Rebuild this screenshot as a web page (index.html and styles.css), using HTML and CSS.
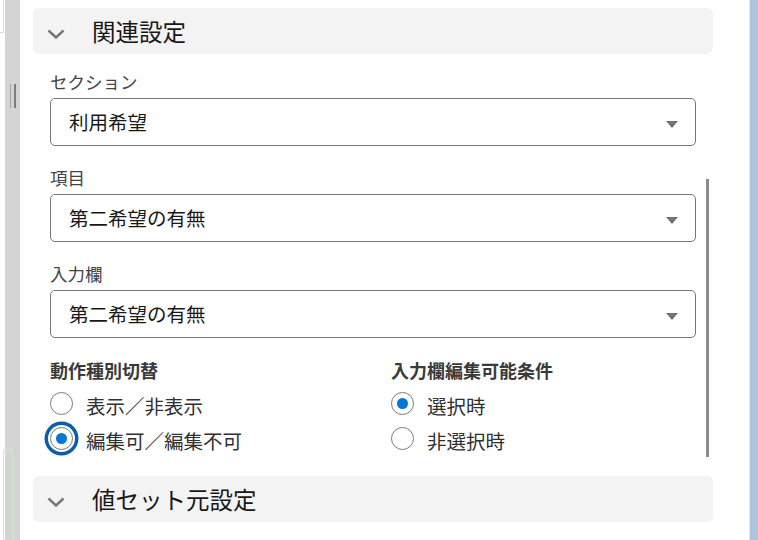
FILE: index.html
```html
<!DOCTYPE html>
<html lang="ja">
<head>
<meta charset="utf-8">
<title>関連設定</title>
<link rel="stylesheet" href="styles.css">
</head>
<body>
<div class="app">
  <div class="edge"><span class="edge-box top"></span><span class="edge-box bottom"></span></div>
  <div class="splitter"><span class="grip thin"></span><span class="grip thick"></span></div>
  <main class="panel">
    <div class="section-header">
      <svg class="chevron" width="18" height="10" viewBox="0 0 18 10"><path d="M1.5 1.5 L9 8.5 L16.5 1.5" fill="none" stroke="#767676" stroke-width="2.4"/></svg>
      <span class="section-title">関連設定</span>
    </div>
    <div class="fields">
      <div class="field">
        <div class="field-label">セクション</div>
        <div class="select"><span class="select-value">利用希望</span><span class="caret"></span></div>
      </div>
      <div class="field">
        <div class="field-label">項目</div>
        <div class="select"><span class="select-value">第二希望の有無</span><span class="caret"></span></div>
      </div>
      <div class="field">
        <div class="field-label">入力欄</div>
        <div class="select"><span class="select-value">第二希望の有無</span><span class="caret"></span></div>
      </div>
      <div class="radio-groups">
        <fieldset class="radio-group">
          <legend class="group-label">動作種別切替</legend>
          <label class="radio-row"><input type="radio" name="kind" class="radio"><span>表示／非表示</span></label>
          <label class="radio-row"><input type="radio" name="kind" class="radio focused" checked><span>編集可／編集不可</span></label>
        </fieldset>
        <fieldset class="radio-group">
          <legend class="group-label">入力欄編集可能条件</legend>
          <label class="radio-row"><input type="radio" name="cond" class="radio" checked><span>選択時</span></label>
          <label class="radio-row"><input type="radio" name="cond" class="radio"><span>非選択時</span></label>
        </fieldset>
      </div>
    </div>
    <div class="section-header second">
      <svg class="chevron" width="18" height="10" viewBox="0 0 18 10"><path d="M1.5 1.5 L9 8.5 L16.5 1.5" fill="none" stroke="#767676" stroke-width="2.4"/></svg>
      <span class="section-title">値セット元設定</span>
    </div>
    <div class="scroll-thumb"></div>
  </main>
  <div class="side"></div>
</div>
</body>
</html>
```
FILE: styles.css
```css
* { box-sizing: border-box; }
html, body {
  margin: 0;
  padding: 0;
  background: #ffffff;
  font-family: "Noto Sans CJK JP", "Noto Sans", sans-serif;
  color: #181818;
}
.app {
  display: flex;
  width: 758px;
  height: 540px;
  overflow: hidden;
}
.edge {
  position: relative;
  width: 5px;
  flex: none;
}
.edge-box {
  position: absolute;
  left: -20px;
  width: 24px;
  border: 1px solid #cfe8cf;
}
.edge-box.top { top: -2px; height: 35px; }
.edge-box.bottom { top: 449px; left: 3px; width: 10px; height: 120px; }
.splitter {
  width: 15px;
  flex: none;
  background: #d4d4d4;
  display: flex;
  align-items: flex-start;
  padding-top: 84px;
  padding-left: 5px;
  gap: 3px;
}
.grip { display: block; height: 24px; }
.grip.thin { width: 1px; background: #a3a3a3; }
.grip.thick { width: 2px; background: #7d7d7d; }
.panel {
  position: relative;
  width: 729px;
  flex: none;
  padding: 8px 36px 0 13px;
}
.section-header {
  display: flex;
  align-items: center;
  height: 46px;
  background: #f3f3f3;
  border-radius: 6px;
  padding-left: 14px;
}
.section-header.second { margin-top: 20px; }
.chevron { flex: none; margin-top: 5px; }
.section-title {
  margin-left: 27px;
  font-size: 23.5px;
  line-height: 30px;
  color: #181818;
}
.fields {
  padding: 16px 17px 0;
}
.field + .field { margin-top: 20px; }
.field-label {
  font-size: 17.5px;
  line-height: 24px;
  color: #444444;
  margin-bottom: 4px;
}
.select {
  position: relative;
  display: flex;
  align-items: center;
  height: 48px;
  border: 1px solid #767676;
  border-radius: 5px;
  padding-left: 18px;
}
.select-value {
  font-size: 19.5px;
  line-height: 26px;
  color: #181818;
}
.caret {
  position: absolute;
  right: 17px;
  top: 22px;
  width: 0;
  height: 0;
  border-left: 6px solid transparent;
  border-right: 6px solid transparent;
  border-top: 7px solid #747474;
}
.radio-groups {
  display: grid;
  grid-template-columns: 341px 1fr;
  margin-top: 20px;
}
.radio-group {
  border: 0;
  margin: 0;
  padding: 0;
  min-width: 0;
}
.group-label {
  padding: 0;
  font-size: 18px;
  font-weight: 700;
  line-height: 24px;
  color: #3a3a3a;
  margin-bottom: 4px;
}
.radio-row {
  display: flex;
  align-items: center;
  height: 35px;
  gap: 13px;
  font-size: 19.5px;
  color: #303030;
}
.radio-row span { line-height: 26px; margin-top: 4px; }
.radio {
  appearance: none;
  -webkit-appearance: none;
  margin: 0;
  flex: none;
  width: 23px;
  height: 23px;
  border: 1px solid #7a7a7a;
  border-radius: 50%;
  background: #ffffff;
  display: grid;
  place-items: center;
}
.radio:checked::after {
  content: "";
  width: 11px;
  height: 11px;
  border-radius: 50%;
  background: #0176d3;
}
.radio.focused {
  box-shadow: 0 0 0 2px #ffffff, 0 0 0 5.5px #0b5cab;
}
.scroll-thumb {
  position: absolute;
  left: 686px;
  top: 179px;
  width: 3px;
  height: 278px;
  background: #8a8a8a;
}
.side {
  flex: 1;
  background: #b0c4de;
  border-left: 1px solid #dfe6f0;
}
```
